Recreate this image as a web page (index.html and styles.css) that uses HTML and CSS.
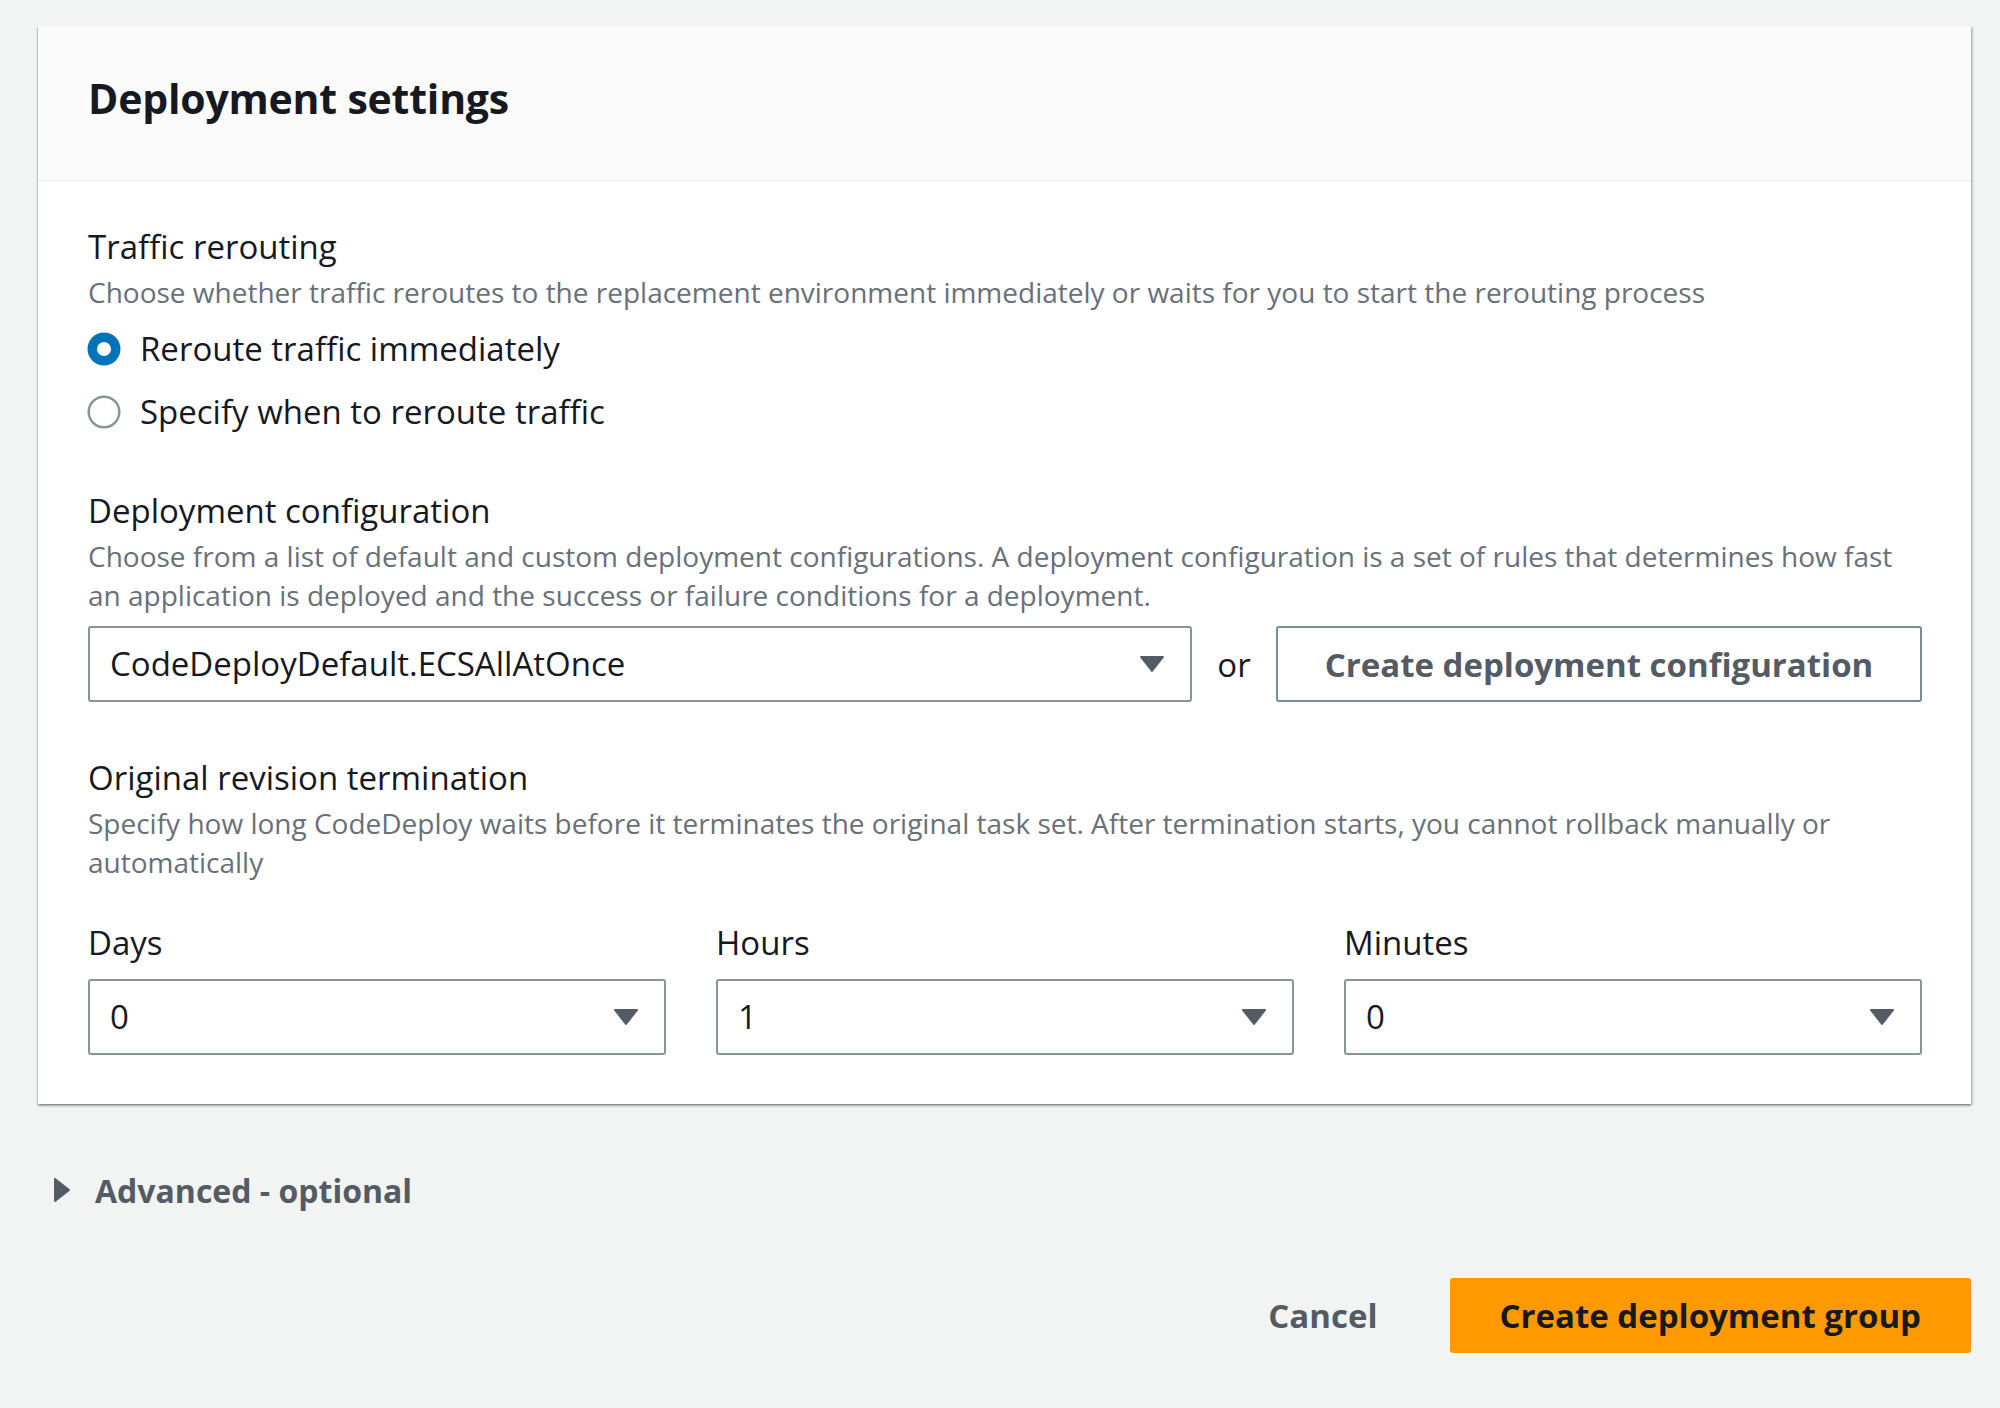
FILE: index.html
```html
<!DOCTYPE html>
<html lang="en">
<head>
<meta charset="utf-8">
<title>Deployment settings</title>
<link rel="stylesheet" href="styles.css">
</head>
<body>
<div class="page">
  <section class="card">
    <header class="card-header">
      <h2 class="card-title">Deployment settings</h2>
    </header>
    <div class="card-body">
      <div class="field">
        <div class="label">Traffic rerouting</div>
        <div class="desc">Choose whether traffic reroutes to the replacement environment immediately or waits for you to start the rerouting process</div>
        <div class="radios">
          <div class="radio-row">
            <svg class="radio" width="34" height="34" viewBox="0 0 34 34"><circle cx="17" cy="17" r="16.5" fill="#0073bb"/><circle cx="17" cy="17" r="7" fill="#fff"/></svg>
            <span class="radio-label">Reroute traffic immediately</span>
          </div>
          <div class="radio-row">
            <svg class="radio" width="34" height="34" viewBox="0 0 34 34"><circle cx="17" cy="17" r="15.3" fill="#fff" stroke="#879596" stroke-width="2.4"/></svg>
            <span class="radio-label">Specify when to reroute traffic</span>
          </div>
        </div>
      </div>

      <div class="field field-gap">
        <div class="label">Deployment configuration</div>
        <div class="desc">Choose from a list of default and custom deployment configurations. A deployment configuration is a set of rules that determines how fast an application is deployed and the success or failure conditions for a deployment.</div>
        <div class="config-row">
          <div class="select select-wide">
            <span class="select-value">CodeDeployDefault.ECSAllAtOnce</span>
            <svg class="caret" width="26" height="18" viewBox="0 0 26 18"><path d="M2 2 H24 L13 16 Z" fill="#545b64" stroke="#545b64" stroke-width="2" stroke-linejoin="round"/></svg>
          </div>
          <span class="or">or</span>
          <button class="btn-secondary" type="button">Create deployment configuration</button>
        </div>
      </div>

      <div class="field field-gap2">
        <div class="label">Original revision termination</div>
        <div class="desc">Specify how long CodeDeploy waits before it terminates the original task set. After termination starts, you cannot rollback manually or automatically</div>
        <div class="time-grid">
          <div class="time-col">
            <div class="label">Days</div>
            <div class="select">
              <span class="select-value">0</span>
              <svg class="caret" width="26" height="18" viewBox="0 0 26 18"><path d="M2 2 H24 L13 16 Z" fill="#545b64" stroke="#545b64" stroke-width="2" stroke-linejoin="round"/></svg>
            </div>
          </div>
          <div class="time-col">
            <div class="label">Hours</div>
            <div class="select">
              <span class="select-value">1</span>
              <svg class="caret" width="26" height="18" viewBox="0 0 26 18"><path d="M2 2 H24 L13 16 Z" fill="#545b64" stroke="#545b64" stroke-width="2" stroke-linejoin="round"/></svg>
            </div>
          </div>
          <div class="time-col">
            <div class="label">Minutes</div>
            <div class="select">
              <span class="select-value">0</span>
              <svg class="caret" width="26" height="18" viewBox="0 0 26 18"><path d="M2 2 H24 L13 16 Z" fill="#545b64" stroke="#545b64" stroke-width="2" stroke-linejoin="round"/></svg>
            </div>
          </div>
        </div>
      </div>
    </div>
  </section>

  <div class="advanced">
    <svg class="adv-caret" width="20" height="26" viewBox="0 0 20 26"><path d="M3 2 L17 13 L3 24 Z" fill="#545b64" stroke="#545b64" stroke-width="2" stroke-linejoin="round"/></svg>
    <span class="adv-text">Advanced - optional</span>
  </div>

  <div class="actions">
    <button class="btn-link" type="button">Cancel</button>
    <button class="btn-primary" type="button">Create deployment group</button>
  </div>
</div>
</body>
</html>
```

FILE: styles.css
```css
* {
  box-sizing: border-box;
}

html, body {
  margin: 0;
  padding: 0;
  background: #f2f3f3;
}

body {
  font-family: "Open Sans", "Noto Sans", "Liberation Sans", sans-serif;
  color: #16191f;
  width: 2000px;
  height: 1408px;
  overflow: hidden;
}

.page {
  padding: 26px 29px 0 38px;
}

.card {
  background: #ffffff;
  box-shadow: 0 2px 2px 0 rgba(0, 28, 36, 0.3), 2px 1px 2px 0 rgba(0, 28, 36, 0.18), -1px 1px 1px 0 rgba(0, 28, 36, 0.12);
}

.card-header {
  height: 155px;
  background: #fafafa;
  border-bottom: 1px solid #eaeded;
  display: flex;
  align-items: center;
  padding: 0 50px 11px;
}

.card-title {
  margin: 0;
  font-size: 41px;
  font-weight: 700;
  line-height: 48px;
  color: #16191f;
  letter-spacing: -0.2px;
}

.card-body {
  padding: 46px 49px 49px 50px;
}

.label {
  font-size: 33px;
  line-height: 40px;
  color: #16191f;
}

.desc {
  margin-top: 6px;
  font-size: 28px;
  line-height: 39px;
  color: #687078;
}

.radios {
  margin-top: 5px;
}

.radio-row {
  height: 63px;
  display: flex;
  align-items: center;
}

.radio {
  flex: none;
  margin-left: -1px;
}

.radio-label {
  margin-left: 19px;
  font-size: 33px;
  line-height: 40px;
}

.field-gap {
  margin-top: 48px;
}

.field-gap2 {
  margin-top: 56px;
}

.config-row {
  margin-top: 11px;
  display: flex;
  align-items: center;
}

.select {
  height: 76px;
  border: 2px solid #879596;
  border-radius: 3px;
  background: #fff;
  display: flex;
  align-items: center;
  justify-content: space-between;
  padding: 0 25px 0 20px;
}

.select-wide {
  width: 1104px;
  flex: none;
}

.select-value {
  font-size: 33px;
  line-height: 40px;
  color: #16191f;
}

.caret {
  flex: none;
}

.or {
  flex: none;
  width: 84px;
  text-align: center;
  font-size: 33px;
  color: #16191f;
}

.btn-secondary {
  flex: 1;
  height: 76px;
  border: 2px solid #7d8998;
  border-radius: 3px;
  background: #fff;
  font-family: inherit;
  font-size: 33px;
  font-weight: 700;
  color: #545b64;
  padding: 0 20px;
}

.time-grid {
  margin-top: 41px;
  display: grid;
  grid-template-columns: 1fr 1fr 1fr;
  column-gap: 50px;
}

.time-col .select {
  margin-top: 16px;
}

.advanced {
  margin-top: 66px;
  display: flex;
  align-items: center;
  height: 40px;
  padding-left: 14px;
}

.adv-caret {
  flex: none;
}

.adv-text {
  margin-left: 23px;
  font-size: 32px;
  font-weight: 700;
  color: #545b64;
}

.actions {
  margin-top: 68px;
  display: flex;
  justify-content: flex-end;
  align-items: center;
}

.btn-link {
  border: none;
  background: transparent;
  font-family: inherit;
  font-size: 33px;
  font-weight: 700;
  color: #545b64;
  padding: 0;
  margin-right: 72px;
}

.btn-primary {
  height: 75px;
  border: none;
  border-radius: 3px;
  background: #ff9900;
  font-family: inherit;
  font-size: 33px;
  font-weight: 700;
  color: #16191f;
  padding: 0 50px;
}
```
